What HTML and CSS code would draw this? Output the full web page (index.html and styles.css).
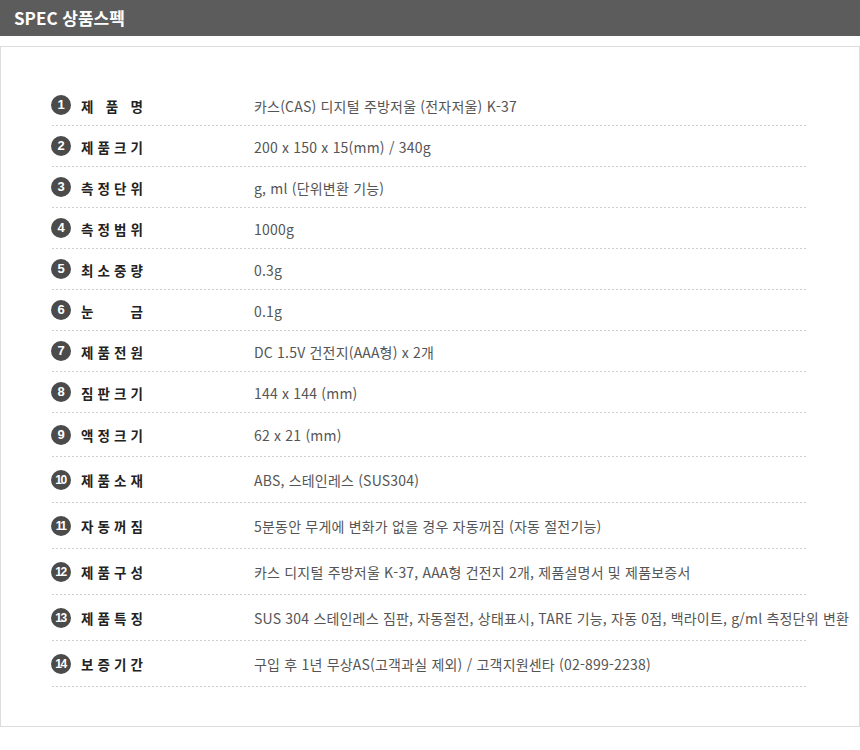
FILE: index.html
```html
<!DOCTYPE html>
<html lang="ko">
<head>
<meta charset="utf-8">
<title>SPEC 상품스펙</title>
<link rel="stylesheet" href="styles.css">
</head>
<body>
<div class="title-bar">SPEC 상품스펙</div>
<div class="spec-box">
  <ul class="spec-list">
    <li class="row"><span class="badge">1</span><span class="label">제 품 명</span><span class="value">카스(CAS) 디지털 주방저울 (전자저울) K-37</span></li>
    <li class="row"><span class="badge">2</span><span class="label">제 품 크 기</span><span class="value">200 x 150 x 15(mm) / 340g</span></li>
    <li class="row"><span class="badge">3</span><span class="label">측 정 단 위</span><span class="value">g, ml (단위변환 기능)</span></li>
    <li class="row"><span class="badge">4</span><span class="label">측 정 범 위</span><span class="value">1000g</span></li>
    <li class="row"><span class="badge">5</span><span class="label">최 소 중 량</span><span class="value">0.3g</span></li>
    <li class="row"><span class="badge">6</span><span class="label">눈 금</span><span class="value">0.1g</span></li>
    <li class="row"><span class="badge">7</span><span class="label">제 품 전 원</span><span class="value">DC 1.5V 건전지(AAA형) x 2개</span></li>
    <li class="row"><span class="badge">8</span><span class="label">짐 판 크 기</span><span class="value">144 x 144 (mm)</span></li>
    <li class="row mid"><span class="badge">9</span><span class="label">액 정 크 기</span><span class="value">62 x 21 (mm)</span></li>
    <li class="row tall"><span class="badge two">10</span><span class="label">제 품 소 재</span><span class="value">ABS, 스테인레스 (SUS304)</span></li>
    <li class="row tall"><span class="badge two">11</span><span class="label">자 동 꺼 짐</span><span class="value">5분동안 무게에 변화가 없을 경우 자동꺼짐 (자동 절전기능)</span></li>
    <li class="row tall"><span class="badge two">12</span><span class="label">제 품 구 성</span><span class="value">카스 디지털 주방저울 K-37, AAA형 건전지 2개, 제품설명서 및 제품보증서</span></li>
    <li class="row tall"><span class="badge two">13</span><span class="label">제 품 특 징</span><span class="value">SUS 304 스테인레스 짐판, 자동절전, 상태표시, TARE 기능, 자동 0점, 백라이트, g/ml 측정단위 변환</span></li>
    <li class="row tall"><span class="badge two">14</span><span class="label">보 증 기 간</span><span class="value">구입 후 1년 무상AS(고객과실 제외) / 고객지원센타 (02-899-2238)</span></li>
  </ul>
</div>
</body>
</html>
```
FILE: styles.css
```css
* { box-sizing: border-box; }
html, body { margin: 0; padding: 0; background: #fff; }
body {
  width: 860px;
  font-family: "Noto Sans CJK KR", "Noto Sans", sans-serif;
}
.title-bar {
  height: 36px;
  line-height: 36px;
  background: #5c5c5c;
  color: #fff;
  font-size: 17px;
  font-weight: bold;
  padding-left: 14px;
}
.spec-box {
  margin-top: 10px;
  border: 1px solid #dcdcdc;
  padding: 38px 0 39px 50px;
}
.spec-list {
  list-style: none;
  margin: 0;
  padding: 0;
  width: 755px;
}
.row {
  display: flex;
  align-items: center;
  height: 41px;
  background-image: linear-gradient(to right, #d0d0d0 50%, transparent 50%);
  background-size: 4px 1px;
  background-repeat: repeat-x;
  background-position: 1px bottom;
  white-space: nowrap;
}
.row.mid { height: 44px; }
.row.tall { height: 46px; }
.badge {
  flex: none;
  width: 20px;
  height: 20px;
  border-radius: 50%;
  background: #4b4b4b;
  color: #fff;
  font-family: "Liberation Sans", Arial, sans-serif;
  font-weight: bold;
  font-size: 13px;
  line-height: 20px;
  text-align: center;
  margin-top: -1px;
}
.badge.two {
  font-size: 12px;
  letter-spacing: -1.5px;
  text-indent: -1px;
}
.label {
  flex: none;
  width: 62px;
  margin-left: 10px;
  font-size: 13.5px;
  font-weight: bold;
  color: #222;
  text-align: justify;
  text-align-last: justify;
}
.value {
  margin-left: 111px;
  font-size: 14px;
  letter-spacing: 0.2px;
  color: #555;
}
```
